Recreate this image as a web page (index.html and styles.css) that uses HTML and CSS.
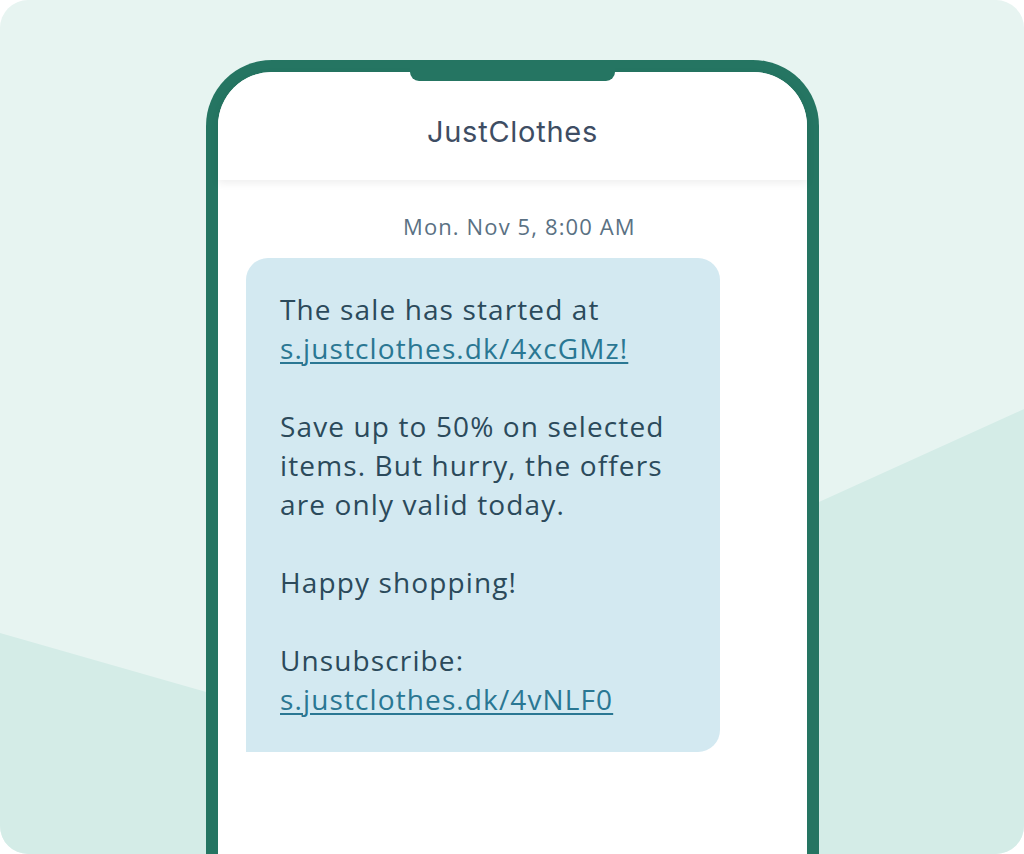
FILE: index.html
```html
<!DOCTYPE html>
<html lang="en">
<head>
<meta charset="utf-8">
<title>JustClothes SMS</title>
<link rel="stylesheet" href="styles.css">
</head>
<body>
<div class="stage">
  <div class="phone">
    <div class="notch"></div>
    <header class="phone-header">JustClothes</header>
    <div class="thread">
      <div class="timestamp">Mon. Nov 5, 8:00 AM</div>
      <div class="bubble">
        <p>The sale has started at<br><a href="#">s.justclothes.dk/4xcGMz!</a></p>
        <p>Save up to 50% on selected<br>items. But hurry, the offers<br>are only valid today.</p>
        <p>Happy shopping!</p>
        <p>Unsubscribe:<br><a href="#">s.justclothes.dk/4vNLF0</a></p>
      </div>
    </div>
  </div>
</div>
</body>
</html>
```

FILE: styles.css
```css
html, body {
  margin: 0;
  padding: 0;
  background: #ffffff;
}

.stage {
  position: relative;
  width: 1024px;
  height: 854px;
  border-radius: 28px;
  background: #e7f4f1;
  overflow: hidden;
  padding-top: 60px;
  box-sizing: border-box;
}

.stage::before {
  content: "";
  position: absolute;
  inset: 0;
  background: #d4ece7;
  clip-path: polygon(0 633px, 325px 726px, 1024px 409px, 1024px 854px, 0 854px);
}

.phone {
  position: relative;
  margin-left: 206px;
  width: 613px;
  height: 900px;
  box-sizing: border-box;
  border: 12px solid #257562;
  border-bottom: none;
  border-radius: 66px 66px 0 0;
  background: #ffffff;
  display: flex;
  flex-direction: column;
}

.notch {
  position: absolute;
  top: -12px;
  left: 192px;
  width: 205px;
  height: 21px;
  background: #257562;
  border-radius: 0 0 9px 9px;
  z-index: 2;
}

.phone-header {
  height: 108px;
  box-sizing: border-box;
  padding-top: 44px;
  text-align: center;
  font-family: Inter, "Liberation Sans", sans-serif;
  font-size: 29px;
  font-weight: 400;
  letter-spacing: 0.75px;
  line-height: 32px;
  color: #3e4d63;
  border-radius: 54px 54px 0 0;
  background: #ffffff;
  box-shadow: 0 3px 8px rgba(0, 0, 0, 0.07);
  position: relative;
  z-index: 1;
}

.thread {
  display: flex;
  flex-direction: column;
  padding: 0 0 0 28px;
  font-family: "Open Sans", Lato, sans-serif;
  letter-spacing: 0.07em;
}

.timestamp {
  margin-top: 31px;
  height: 30px;
  line-height: 30px;
  padding-left: 157px;
  font-size: 22px;
  color: #5a7183;
}

.bubble {
  margin-top: 17px;
  width: 474px;
  box-sizing: border-box;
  padding: 32px 20px 33px 34px;
  background: #d3e9f1;
  border-radius: 22px 22px 22px 0;
  color: #2b4a5b;
  font-size: 28px;
  line-height: 39px;
}

.bubble p {
  margin: 0 0 39px;
}

.bubble p:last-child {
  margin-bottom: 0;
}

.bubble a {
  color: #2a7793;
  text-decoration: underline;
  text-decoration-thickness: 1.5px;
  text-underline-offset: 3px;
}
```
